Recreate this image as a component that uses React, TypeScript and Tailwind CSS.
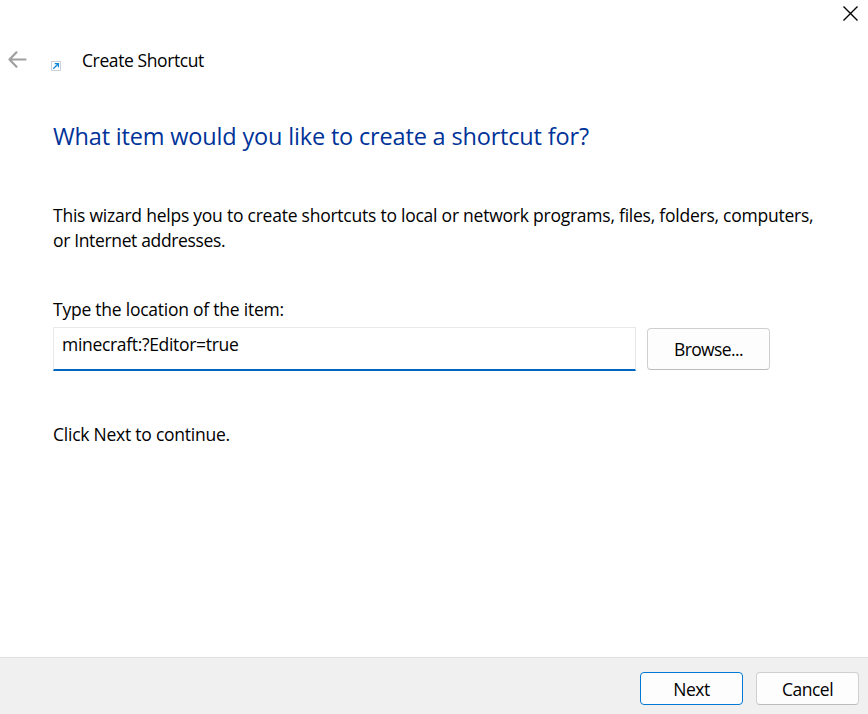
import React from "react";

export default function App() {
  return (
    <div className="flex h-[714px] w-[868px] flex-col bg-white font-['Open_Sans',sans-serif] text-[17.5px] font-normal tracking-[-0.237px] text-black">
      <header className="flex h-[28px] justify-end pt-[6px] pr-[10px]">
        <svg width="15" height="15" viewBox="0 0 15 15" fill="none" stroke="#000" strokeWidth="1.4"><path d="M.5.5 14.5 14.5M14.5.5.5 14.5" /></svg>
      </header>
      <div className="flex h-[64px] items-center pl-[8px]">
        <svg width="19" height="18" viewBox="0 0 19 18" fill="none" stroke="#a0a0a0" strokeWidth="2.2" strokeLinecap="round" strokeLinejoin="round"><path d="M8.5 1.3 1.5 8.5 8.5 15.7M1.5 8.5H17.5" /></svg>
        <svg className="mt-[11px] ml-[24px]" width="10" height="10" viewBox="0 0 10 10" fill="none"><path d="M.5.5h9v9h-9z" fill="#fff" stroke="#c8d0dc" /><path d="M2.3 7.7 7 3M3.7 2.6h3.7V6.3" stroke="#1488d8" strokeWidth="1.3" /></svg>
        <span className="ml-[21px] pt-[1px] tracking-[-0.4px] whitespace-nowrap">Create Shortcut</span>
      </div>
      <main className="flex-1 pl-[53px]">
        <h1 className="mt-[27px] h-[35px] text-[23.5px] leading-[34px] font-normal tracking-[-0.17px] whitespace-nowrap text-[#003399]">What item would you like to create a shortcut for?</h1>
        <p className="mt-[49px] leading-[25px] whitespace-nowrap">This wizard helps you to create shortcuts to local or network programs, files, folders, computers,<br /><span className="tracking-[-0.35px]">or Internet addresses.</span></p>
        <label htmlFor="location" className="mt-[44px] block leading-[25px]">Type the location of the item:</label>
        <div className="mt-[5px] flex gap-[11px]">
          <input id="location" defaultValue="minecraft:?Editor=true" className="h-[44px] w-[583px] border border-b-2 border-[#e8e8e8] border-b-[#0067c0] pt-0 pb-[9px] pl-[8px] leading-[25px] tracking-[-0.32px] outline-none" />
          <button className="mt-[1px] h-[42px] w-[123px] rounded-[4px] border border-[#d0d0d0] border-b-[#bcbcbc] bg-[#fdfdfd] pt-[1px] tracking-[-0.6px]">Browse...</button>
        </div>
        <p className="mt-[51px] leading-[25px]">Click Next to continue.</p>
      </main>
      <footer className="flex h-[57px] justify-end gap-[13px] border-t border-[#dfdfdf] bg-[#f0f0f0] pt-[14px] pr-[9px]">
        <button className="h-[33px] w-[103px] rounded-[4px] border border-[#0078d4] bg-[#fdfdfd] pt-[1px] tracking-[-0.5px]">Next</button>
        <button className="h-[33px] w-[103px] rounded-[4px] border border-[#d0d0d0] border-b-[#bcbcbc] bg-[#fdfdfd] pt-[1px] tracking-[-0.5px]">Cancel</button>
      </footer>
    </div>
  );
}
